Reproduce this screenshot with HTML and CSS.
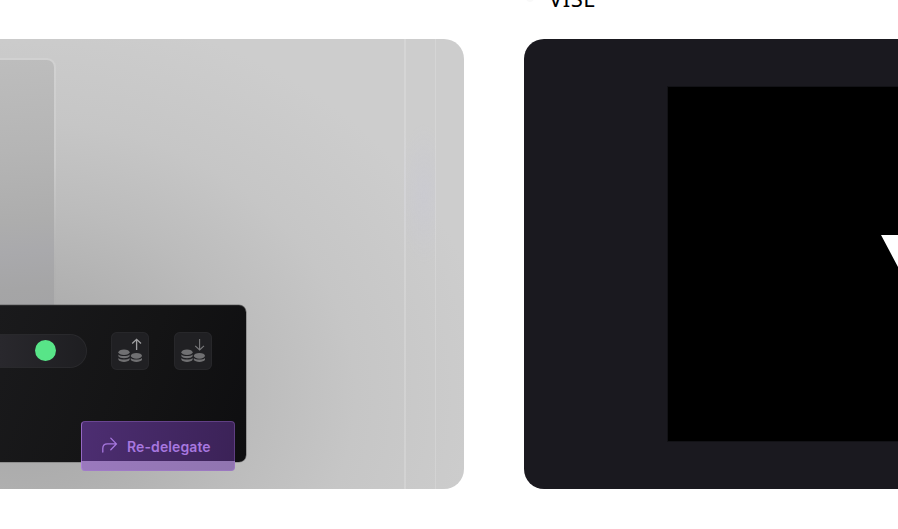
FILE: index.html
```html
<!DOCTYPE html>
<html lang="en">
<head>
<meta charset="utf-8">
<title>Projects</title>
<link rel="stylesheet" href="styles.css">
</head>
<body>
<main class="projects">
  <section class="project">
    <div class="card card-light">
      <div class="stripe"></div>
      <div class="glass"></div>
      <div class="panel">
        <div class="controls">
          <div class="slider"><span class="thumb"></span></div>
          <button class="coin-button" aria-label="Stake">
            <svg width="38" height="38" viewBox="0 0 38 38">
              <g class="coins">
                <ellipse cx="13" cy="20.3" rx="5.6" ry="2.8"/>
                <path d="M7.4 22.4c1.6 2.1 9.6 2.1 11.2 0v1.8c-1.4 2.6-9.8 2.6-11.2 0zM7.4 26c1.6 2.1 9.6 2.1 11.2 0v1.8c-1.4 2.8-9.8 2.8-11.2 0z"/>
                <ellipse cx="25.4" cy="23.8" rx="5.6" ry="2.9"/>
                <path d="M19.8 26c1.6 2.1 9.6 2.1 11.2 0v1.8c-1.4 2.8-9.8 2.8-11.2 0z"/>
              </g>
              <path class="arrow arrow-up" d="M25.6 18V7.5M21.2 11.5l4.4-4.2 4.4 4.2"/>
            </svg>
          </button>
          <button class="coin-button" aria-label="Unstake">
            <svg width="38" height="38" viewBox="0 0 38 38">
              <g class="coins">
                <ellipse cx="13" cy="20.3" rx="5.6" ry="2.8"/>
                <path d="M7.4 22.4c1.6 2.1 9.6 2.1 11.2 0v1.8c-1.4 2.6-9.8 2.6-11.2 0zM7.4 26c1.6 2.1 9.6 2.1 11.2 0v1.8c-1.4 2.8-9.8 2.8-11.2 0z"/>
                <ellipse cx="25.4" cy="23.8" rx="5.6" ry="2.9"/>
                <path d="M19.8 26c1.6 2.1 9.6 2.1 11.2 0v1.8c-1.4 2.8-9.8 2.8-11.2 0z"/>
              </g>
              <path class="arrow" d="M25.6 7v10.8M21.2 13.8l4.4 4.2 4.4-4.2"/>
            </svg>
          </button>
        </div>
        <button class="redelegate">
          <svg width="16" height="16" viewBox="0 0 16 16"><path d="M.8 15V11.5Q.8 6.9 5.4 6.9H14M8.8 1.1L14.4 6.9 8.8 12.7"/></svg>
          <span>Re-delegate</span>
        </button>
      </div>
    </div>
  </section>
  <section class="project">
    <h2 class="title"><i class="dot"></i>VISE</h2>
    <div class="card card-dark">
      <div class="poster">
        <svg width="17" height="32" viewBox="0 0 17 32"><path fill="#fff" d="M0 0H17V32z"/></svg>
      </div>
    </div>
  </section>
</main>
</body>
</html>
```
FILE: styles.css
```css
* { box-sizing: border-box; }
body { margin: 0; height: 529px; overflow: hidden; background: #fff; font-family: "Noto Sans", sans-serif; }
button { padding: 0; font: inherit; }
svg { display: block; }

.projects { display: grid; grid-template-columns: 464px minmax(0, 1fr); column-gap: 60px; height: 489px; }
.project { display: flex; flex-direction: column; justify-content: flex-end; min-height: 0; }
.title { display: flex; align-items: center; gap: 15px; margin: 0 0 26px; padding-left: 2px; font-size: 22px; line-height: 30px; font-weight: 400; letter-spacing: .5px; color: #000; }
.dot { width: 8px; height: 8px; border-radius: 50%; background: #f9f9f9; }
.card { flex: none; height: 450px; overflow: hidden; }

.card-light {
  display: grid;
  grid-template: 450px / 464px;
  border-radius: 0 20px 20px 0;
  background: radial-gradient(ellipse 430px 350px at 20px 355px, #a5a5a6 0%, #afafaf 28%, #bcbcbc 54%, #c6c6c6 78%, #cdcdcd 110%);
}
.stripe, .glass, .panel { grid-area: 1 / 1; }
.stripe {
  justify-self: end;
  width: 32px;
  margin-right: 28px;
  border: solid rgba(255, 255, 255, .17);
  border-width: 0 1px 0 2px;
  background: radial-gradient(ellipse 26px 70px at 18px 155px, rgba(196, 196, 215, .3), transparent);
}
.glass {
  width: 56px;
  height: 260px;
  margin-top: 19px;
  padding: 2px 2px 0 0;
  border-radius: 0 9px 0 0;
  background: linear-gradient(180deg, #d1d1d1, #cbcbcb 40%, #b2b2b2 80%, #acacac);
}
.glass::before {
  content: "";
  display: block;
  height: 100%;
  border-radius: 0 7px 0 0;
  background: linear-gradient(176deg, #bdbdbd 0%, #b5b5b5 35%, #adadad 62%, #a9a9ac 74%, #a5a5a6 88%, #a3a3a5 100%);
}
.panel {
  display: flex;
  flex-direction: column;
  align-items: flex-end;
  justify-content: space-between;
  width: 246px;
  height: 157px;
  margin-top: 266px;
  padding-top: 27px;
  border-radius: 0 7px 7px 0;
  background: linear-gradient(110deg, #1a1a1c, #141415 55%, #0e0e10);
  box-shadow: 0 0 0 .6px rgba(70, 70, 70, .6), inset 0 1px rgba(255, 255, 255, .08);
}
.controls { display: flex; align-items: center; padding-right: 34px; }
.slider {
  display: flex;
  align-items: center;
  justify-content: flex-end;
  width: 87px;
  height: 34px;
  margin-right: 24px;
  padding-right: 30px;
  border: 1px solid #29292c;
  border-left: 0;
  border-radius: 0 17px 17px 0;
  background: linear-gradient(90deg, #29282d, #1e1e21);
}
.thumb { width: 21px; height: 21px; margin-top: -1px; border-radius: 50%; background: #58e588; }
.coin-button { width: 38px; height: 38px; border: 0; border-radius: 6px; background: #202023; box-shadow: inset 0 0 0 1px #27272a; }
.coin-button + .coin-button { margin-left: 25px; }
.coins { fill: #707072; }
.arrow { fill: none; stroke: #79797b; stroke-width: 1.1; }
.arrow-up { stroke: #a0a0a2; stroke-width: 1.3; }
.redelegate {
  display: flex;
  align-items: center;
  gap: 9px;
  flex: none;
  width: 154px;
  height: 50px;
  margin: 0 11px -9px 0;
  padding-left: 20px;
  border: 1px solid rgba(180, 130, 230, .3);
  border-left-color: rgba(180, 130, 230, .7);
  border-radius: 4px;
  background: linear-gradient(100deg, #4d2e72 0%, #3b2257 100%) 0 0 / 100% 40px no-repeat, linear-gradient(90deg, #9a79bd, #9075b0);
  background-origin: border-box;
  color: #a777df;
  font: 600 14px "Inter", sans-serif;
  line-height: 20px;
}
.redelegate span { padding-top: 1px; letter-spacing: .1px; }
.redelegate svg { margin-top: -2px; fill: none; stroke: #a777df; stroke-width: 1.3; stroke-linecap: round; }

.card-dark { padding: 47px 0 0 143px; border-radius: 20px 0 0 20px; background: #1a191f; }
.poster { display: flex; justify-content: flex-end; height: 356px; padding-top: 148px; border: 1px solid #121216; border-right: 0; background: #000; }
```
